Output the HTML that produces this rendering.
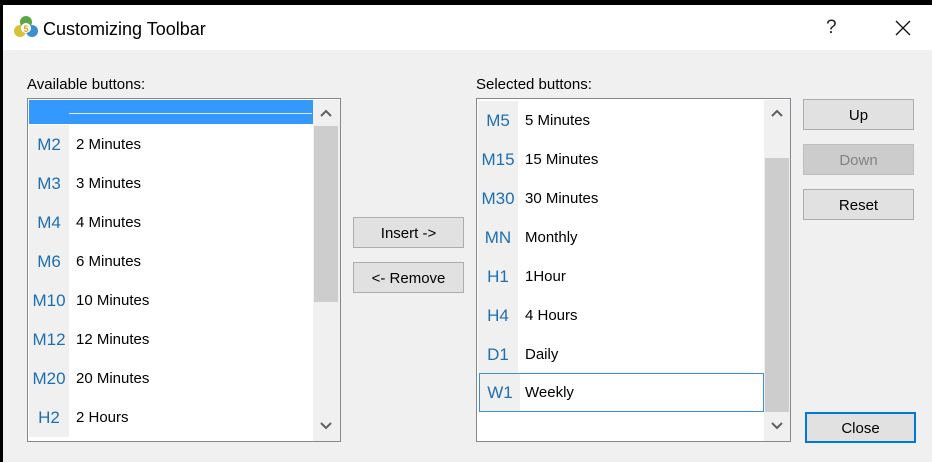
<!DOCTYPE html>
<html><head><style>
*{margin:0;padding:0;box-sizing:border-box}
body{width:932px;height:462px;overflow:hidden;background:#000;font-family:"Liberation Sans",sans-serif;position:relative}
.a{position:absolute}
.dlg{left:3px;top:5px;width:929px;height:457px;background:#f0f0f0}
.title{left:3px;top:5px;width:929px;height:45px;background:#fff}
.lbl{font-size:15px;color:#000}
.box{background:#fff;border:1px solid #828790}
.row{position:absolute;height:39px;font-size:15px;color:#000}
.ic{position:absolute;left:0;top:0;width:40px;height:39px;background:#f0f0f0;color:#1e6fb0;font-size:17px;text-align:center;line-height:39px}
.tx{position:absolute;left:47px;top:0;line-height:39px}
.btn{position:absolute;width:111px;height:31px;background:#e1e1e1;border:1px solid #adadad;font-size:15px;text-align:center;line-height:31px;color:#000}
.sb{position:absolute;background:#f0f0f0}
</style></head><body>
<div class="a dlg"></div>
<div class="a title"></div>
<svg class="a" style="left:13px;top:14px" width="26" height="26" viewBox="0 0 26 26">
<circle cx="13" cy="8" r="6" fill="#5aa845"/>
<circle cx="7" cy="17" r="6" fill="#d8c23a"/>
<circle cx="19" cy="17" r="6" fill="#3a8fd0"/>
<circle cx="13" cy="14" r="5" fill="#fff"/>
<text x="13" y="18" font-size="9" font-weight="bold" fill="#e8a020" text-anchor="middle" font-family="Liberation Sans">5</text>
</svg>
<div class="a" style="left:43px;top:19px;font-size:18px;color:#000">Customizing Toolbar</div>
<div class="a" style="left:826px;top:17px;font-size:19px;color:#222">?</div>
<svg class="a" style="left:895px;top:20px" width="16" height="16"><path d="M1 1L15 15M15 1L1 15" stroke="#111" stroke-width="1.3"/></svg>

<div class="a lbl" style="left:27px;top:76px">Available buttons:</div>
<div class="a lbl" style="left:476px;top:76px">Selected buttons:</div>

<div class="a box" style="left:27px;top:98px;width:314px;height:344px;overflow:hidden">
 <div class="a" style="left:1px;top:1px;width:284px;height:24px;background:#3399ff"></div>
 <div class="a" style="left:41px;top:14px;width:243px;height:1px;background:#e8e8e8"></div>
 <div class="row" style="left:1px;top:26px;width:284px"><div class="ic">M2</div><div class="tx">2 Minutes</div></div>
 <div class="row" style="left:1px;top:65px;width:284px"><div class="ic">M3</div><div class="tx">3 Minutes</div></div>
 <div class="row" style="left:1px;top:104px;width:284px"><div class="ic">M4</div><div class="tx">4 Minutes</div></div>
 <div class="row" style="left:1px;top:143px;width:284px"><div class="ic">M6</div><div class="tx">6 Minutes</div></div>
 <div class="row" style="left:1px;top:182px;width:284px"><div class="ic">M10</div><div class="tx">10 Minutes</div></div>
 <div class="row" style="left:1px;top:221px;width:284px"><div class="ic">M12</div><div class="tx">12 Minutes</div></div>
 <div class="row" style="left:1px;top:260px;width:284px"><div class="ic">M20</div><div class="tx">20 Minutes</div></div>
 <div class="row" style="left:1px;top:299px;width:284px"><div class="ic">H2</div><div class="tx">2 Hours</div></div>
 <div class="sb" style="left:285px;top:1px;width:27px;height:341px"></div>
 <div class="sb" style="left:286px;top:27px;width:24px;height:176px;background:#cdcdcd"></div>
 <svg class="a" style="left:291px;top:9px" width="14" height="10"><path d="M2 8L7 3L12 8" stroke="#606060" stroke-width="2" fill="none"/></svg>
 <svg class="a" style="left:291px;top:322px" width="14" height="10"><path d="M2 2L7 7L12 2" stroke="#606060" stroke-width="2" fill="none"/></svg>
</div>

<div class="a box" style="left:476px;top:98px;width:315px;height:344px;overflow:hidden">
 <div class="row" style="left:1px;top:2px;width:286px"><div class="ic">M5</div><div class="tx">5 Minutes</div></div>
 <div class="row" style="left:1px;top:41px;width:286px"><div class="ic">M15</div><div class="tx">15 Minutes</div></div>
 <div class="row" style="left:1px;top:80px;width:286px"><div class="ic">M30</div><div class="tx">30 Minutes</div></div>
 <div class="row" style="left:1px;top:119px;width:286px"><div class="ic">MN</div><div class="tx">Monthly</div></div>
 <div class="row" style="left:1px;top:158px;width:286px"><div class="ic">H1</div><div class="tx">1Hour</div></div>
 <div class="row" style="left:1px;top:197px;width:286px"><div class="ic">H4</div><div class="tx">4 Hours</div></div>
 <div class="row" style="left:1px;top:236px;width:286px"><div class="ic">D1</div><div class="tx">Daily</div></div>
 <div class="row" style="left:2px;top:274px;width:285px;border:1px solid #3a8ee6"><div class="ic" style="height:37px;line-height:37px">W1</div><div class="tx" style="left:45px;line-height:37px">Weekly</div></div>
 <div class="sb" style="left:287px;top:1px;width:26px;height:341px"></div>
 <div class="sb" style="left:288px;top:59px;width:24px;height:254px;background:#cdcdcd"></div>
 <svg class="a" style="left:293px;top:9px" width="14" height="10"><path d="M2 8L7 3L12 8" stroke="#606060" stroke-width="2" fill="none"/></svg>
 <svg class="a" style="left:293px;top:322px" width="14" height="10"><path d="M2 2L7 7L12 2" stroke="#606060" stroke-width="2" fill="none"/></svg>
</div>

<div class="btn" style="left:353px;top:217px">Insert -&gt;</div>
<div class="btn" style="left:353px;top:262px">&lt;- Remove</div>
<div class="btn" style="left:803px;top:99px">Up</div>
<div class="btn" style="left:803px;top:144px;background:#cccccc;border-color:#bfbfbf;color:#838383">Down</div>
<div class="btn" style="left:803px;top:189px">Reset</div>
<div class="btn" style="left:805px;top:412px;border:2px solid #0078d7;line-height:29px">Close</div>
</body></html>
